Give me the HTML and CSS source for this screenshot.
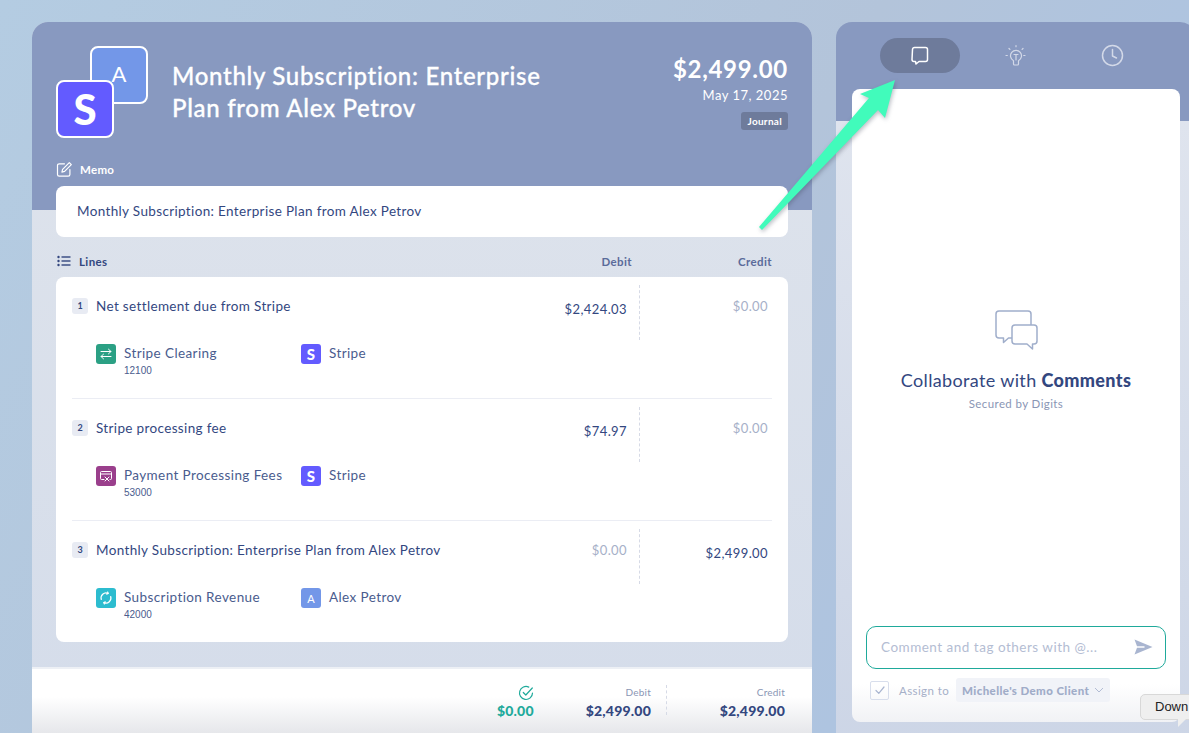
FILE: index.html
```html
<!DOCTYPE html>
<html lang="en">
  <head>
    <meta charset="UTF-8" />
    <meta name="viewport" content="width=device-width, initial-scale=1.0" />
    <title>Monthly Subscription | Digits</title>
    <link rel="stylesheet" href="styles.css">
  </head>
  <body>
    <div class="page">
      <div class="panel left">
        <div class="left-top">
          <div class="head">
            <div class="logos">
              <div class="logo logo-a">A</div>
              <div class="logo logo-s">S</div>
            </div>
            <h1 class="title">Monthly Subscription: Enterprise Plan from Alex Petrov</h1>
            <div class="head-right">
              <div class="amount">$2,499.00</div>
              <div class="date">May 17, 2025</div>
              <div class="badge">Journal</div>
            </div>
          </div>
          <div class="memo-label">
            <svg width="17" height="17" viewBox="0 0 17 17" fill="none" stroke="#fff" stroke-width="1.2" stroke-linecap="round" stroke-linejoin="round">
              <path d="M8.5 2.8H3.2a1.7 1.7 0 0 0-1.7 1.7v9a1.7 1.7 0 0 0 1.7 1.7h9a1.7 1.7 0 0 0 1.7-1.7V8.5" />
              <path d="M13.3 1.6l2 2L8.6 10.4l-2.7.7.7-2.7z" />
            </svg>
            <span>Memo</span>
          </div>
        </div>
        <div class="left-body">
          <div class="memo-card">Monthly Subscription: Enterprise Plan from Alex Petrov</div>
          <div class="lines-head">
            <svg width="14" height="12" viewBox="0 0 14 12" fill="#33477f">
              <circle cx="1.5" cy="2" r="1.2" />
              <circle cx="1.5" cy="6" r="1.2" />
              <circle cx="1.5" cy="10" r="1.2" />
              <rect x="4.5" y="1.3" width="9" height="1.4" />
              <rect x="4.5" y="5.3" width="9" height="1.4" />
              <rect x="4.5" y="9.3" width="9" height="1.4" />
            </svg>
            <span class="lines-name">Lines</span>
            <span class="col-debit">Debit</span>
            <span class="col-credit">Credit</span>
          </div>
          <div class="lines-card">
            <div class="line">
              <div class="line-top">
                <span class="num">1</span>
                <span class="line-name">Net settlement due from Stripe</span>
                <span class="debit low">$2,424.03</span>
                <span class="credit zero">$0.00</span>
              </div>
              <div class="chips">
                <div class="chip chip-first">
                  <span class="ico green">
                    <svg width="14" height="14" viewBox="0 0 14 14" fill="none" stroke="#fff" stroke-width="1" stroke-linecap="round" stroke-linejoin="round">
                      <path d="M2 4.5h10M9.5 2.2L12 4.5 9.5 6.800M12 9.5H2M4.5 7.2L2 9.5l2.5 2.3" />
                    </svg>
                  </span>
                  <div>
                    <div class="chip-name">Stripe Clearing</div>
                    <div class="chip-code">12100</div>
                  </div>
                </div>
                <div class="chip">
                  <span class="ico violet stripe-s">S</span>
                  <div class="chip-name">Stripe</div>
                </div>
              </div>
            </div>
            <div class="line">
              <div class="line-top">
                <span class="num">2</span>
                <span class="line-name">Stripe processing fee</span>
                <span class="debit low">$74.97</span>
                <span class="credit zero">$0.00</span>
              </div>
              <div class="chips">
                <div class="chip chip-first">
                  <span class="ico purple">
                    <svg width="14" height="14" viewBox="0 0 14 14" fill="none" stroke="#fff" stroke-width="1" stroke-linecap="round" stroke-linejoin="round">
                      <path d="M5 10.5H2.500a1 1 0 0 1-1-1v-6a1 1 0 0 1 1-1h9a1 1 0 0 1 1 1v6a1 1 0 0 1-1 1H11M1.5 5h11M6 8l4 4M10 8l-4 4" />
                    </svg>
                  </span>
                  <div>
                    <div class="chip-name">Payment Processing Fees</div>
                    <div class="chip-code">53000</div>
                  </div>
                </div>
                <div class="chip">
                  <span class="ico violet stripe-s">S</span>
                  <div class="chip-name">Stripe</div>
                </div>
              </div>
            </div>
            <div class="line">
              <div class="line-top">
                <span class="num">3</span>
                <span class="line-name">Monthly Subscription: Enterprise Plan from Alex Petrov</span>
                <span class="debit zero">$0.00</span>
                <span class="credit low">$2,499.00</span>
              </div>
              <div class="chips">
                <div class="chip chip-first">
                  <span class="ico teal">
                    <svg width="14" height="14" viewBox="0 0 14 14" fill="none" stroke="#fff" stroke-width="1.2" stroke-linecap="round" stroke-linejoin="round">
                      <path d="M2.3 8.5A5 5 0 0 1 9 2.4M11.7 5.5A5 5 0 0 1 5 11.6" />
                      <path d="M8.6 1l.6 1.5-1.5.6M5.4 13l-.6-1.5 1.5-.6" />
                    </svg>
                  </span>
                  <div>
                    <div class="chip-name">Subscription Revenue</div>
                    <div class="chip-code">42000</div>
                  </div>
                </div>
                <div class="chip">
                  <span class="ico blue">A</span>
                  <div class="chip-name">Alex Petrov</div>
                </div>
              </div>
            </div>
          </div>
        </div>
        <div class="totals">
          <div class="total-check">
            <svg width="16" height="16" viewBox="0 0 16 16" fill="none" stroke="#1faa9b" stroke-width="1.2" stroke-linecap="round" stroke-linejoin="round">
              <path d="M14.5 8A6.5 6.5 0 1 1 10.8 2.1" />
              <path d="M5.3 7.5l2.5 2.5 6.5-7" />
            </svg>
            <div class="total-zero">$0.00</div>
          </div>
          <div class="total total-debit">
            <div class="total-label">Debit</div>
            <div class="total-value">$2,499.00</div>
          </div>
          <div class="total total-credit">
            <div class="total-label">Credit</div>
            <div class="total-value">$2,499.00</div>
          </div>
        </div>
      </div>

      <div class="panel right">
        <div class="tabs">
          <div class="tab active">
            <svg width="22" height="22" viewBox="0 0 22 22" fill="none" stroke="#fff" stroke-width="1.5" stroke-linejoin="round">
              <path d="M3.5 4.5a2 2 0 0 1 2-2h11a2 2 0 0 1 2 2v10a2 2 0 0 1-2 2h-6.500l-3 2.500-.5-2.500h-1.500a2 2 0 0 1-2-2z" />
            </svg>
          </div>
          <div class="tab">
            <svg width="24" height="24" viewBox="0 0 24 24" fill="none" stroke="#d3d9e8" stroke-width="1.2" stroke-linecap="round" stroke-linejoin="round">
              <path d="M9.5 20v-3.300a5.500 5.500 0 1 1 5 0V20a1 1 0 0 1-1 1h-3a1 1 0 0 1-1-1z" />
              <path d="M10 10.5h4M12 10.5V16M12 1.5v1.2M5 4.5l.9.9M19 4.5l-.9.9M2 11.5h1.300M21 11.5h-1.300" />
            </svg>
          </div>
          <div class="tab">
            <svg width="23" height="23" viewBox="0 0 23 23" fill="none" stroke="#d3d9e8" stroke-width="1.5" stroke-linecap="round" stroke-linejoin="round">
              <circle cx="11.5" cy="11.5" r="10" />
              <path d="M11.5 5.5V12l4 2" />
            </svg>
          </div>
        </div>
        <div class="comments">
          <div class="empty">
            <svg width="44" height="44" viewBox="0 0 44 44" fill="none" stroke="#a0aecb" stroke-width="1.5" stroke-linejoin="round">
              <path d="M19 30h-4.500l-5 4.500v-4.500H5a3 3 0 0 1-3-3V6a3 3 0 0 1 3-3h29a3 3 0 0 1 3 3v11" />
              <path d="M18 20a3 3 0 0 1 3-3h19a3 3 0 0 1 3 3v13a3 3 0 0 1-3 3h-1.500v5l-5.500-5H21a3 3 0 0 1-3-3z" fill="#fff" />
            </svg>
            <div class="empty-title">Collaborate with <b>Comments</b></div>
            <div class="empty-sub">Secured by Digits</div>
          </div>
          <div class="input">
            <span>Comment and tag others with @...</span>
            <svg width="19" height="16" viewBox="0 0 19 16" fill="#a9b5d0">
              <path d="M.5.5L18.5 8 .5 15.500 3 8.800h7.500V7.200H3z" />
            </svg>
          </div>
          <div class="assign">
            <span class="check">
              <svg width="12" height="12" viewBox="0 0 12 12" fill="none" stroke="#a9b5d0" stroke-width="1.2" stroke-linecap="round" stroke-linejoin="round">
                <path d="M2 6.5l2.800 2.800L10 3" />
              </svg>
            </span>
            <span class="assign-label">Assign to</span>
            <span class="select">
              Michelle's Demo Client
              <svg width="10" height="6" viewBox="0 0 10 6" fill="none" stroke="#aab5cf" stroke-width="0.9">
                <path d="M1 1l4 4 4-4" />
              </svg>
            </span>
          </div>
        </div>
      </div>
    </div>

    <svg class="arrow" width="1189" height="733" viewBox="0 0 1189 733">
      <polygon points="895,80 860,94 869,98 759,227 762,230 878,110 885,118" fill="#41fbbb" />
    </svg>

    <div class="tooltip">Down</div>
  </body>
</html>
```

FILE: styles.css
```css
* {
  padding: 0;
  margin: 0;
  box-sizing: border-box;
}
body {
  width: 1189px;
  height: 733px;
  overflow: hidden;
  position: relative;
  background: linear-gradient(120deg, #b4cce2 0%, #b3c4da 55%, #a9c4e6 100%);
  font-family: "Lato", "Open Sans", sans-serif;
  color: #33477f;
}
.page {
  display: flex;
  gap: 24px;
  padding: 22px 0 0 32px;
  width: 1240px;
  height: 733px;
}
.panel {
  flex: none;
  height: 740px;
  border-radius: 16px 16px 0 0;
  overflow: hidden;
  background: #d6deeb;
}
.left {
  width: 780px;
  display: flex;
  flex-direction: column;
  background: linear-gradient(180deg, #dfe4ec 0%, #d4dcea 100%);
  position: relative;
}
.left-top {
  height: 188px;
  background: #8899c0;
  padding: 24px 24px 0;
  color: #fff;
}
.head {
  display: flex;
  height: 92px;
}
.logos {
  width: 92px;
  height: 92px;
  flex: none;
  position: relative;
}
.logo {
  width: 58px;
  height: 58px;
  border: 2px solid #fff;
  border-radius: 8px;
  position: absolute;
  display: flex;
  align-items: center;
  justify-content: center;
  color: #fff;
}
.logo-a {
  left: 34px;
  top: 0;
  background: #7397e8;
  font-size: 22px;
  padding-bottom: 3px;
}
.logo-s {
  left: 0;
  top: 34px;
  background: #635bff;
  font-size: 42px;
  font-weight: 900;
}
.title {
  flex: none;
  width: 420px;
  margin: 14px 0 0 24px;
  font-size: 24px;
  line-height: 32px;
  font-weight: 500;
  letter-spacing: 0.7px;
  -webkit-text-stroke: 0.3px #fff;
}
.head-right {
  margin-left: auto;
  display: flex;
  flex-direction: column;
  align-items: flex-end;
}
.amount {
  font-size: 24px;
  line-height: 30px;
  font-weight: 700;
  margin-top: 8px;
  letter-spacing: 0.7px;
}
.date {
  font-size: 13px;
  line-height: 18px;
  margin-top: 2px;
  letter-spacing: 0.5px;
}
.badge {
  margin-top: 8px;
  height: 18px;
  padding: 0 6px;
  background: #6e7b9b;
  border-radius: 3px;
  font-size: 10px;
  font-weight: 700;
  line-height: 18px;
  letter-spacing: 0.3px;
}
.memo-label {
  margin-top: 23px;
  display: flex;
  align-items: center;
  gap: 7px;
  font-size: 11.5px;
  font-weight: 700;
  letter-spacing: 0.3px;
}
.left-body {
  flex: 1;
  padding: 0 24px;
  margin-top: -24px;
}
.memo-card {
  height: 51px;
  background: #fff;
  border-radius: 8px;
  padding-left: 21px;
  font-size: 13.5px;
  line-height: 51px;
  letter-spacing: 0.35px;
}
.lines-head {
  height: 40px;
  padding: 8px 0 0 1px;
  display: flex;
  align-items: center;
  font-size: 11.5px;
  font-weight: 700;
  letter-spacing: 0.4px;
  color: #5a6b9a;
}
.lines-name {
  margin-left: 8px;
  color: #33477f;
}
.col-debit {
  margin-left: auto;
  width: 100px;
  text-align: right;
}
.col-credit {
  width: 156px;
  padding-right: 16px;
  text-align: right;
}
.lines-card {
  height: 365px;
  background: #fff;
  border-radius: 8px;
  padding: 0 16px;
}
.line {
  height: 122px;
  border-bottom: 1px solid #ebedf4;
  padding-top: 8px;
}
.line:last-child {
  border-bottom: none;
}
.line-top {
  display: flex;
  height: 55px;
}
.num {
  flex: none;
  width: 16px;
  height: 16px;
  margin-top: 13px;
  background: #e8ebf3;
  border-radius: 3px;
  font-size: 9px;
  font-weight: 700;
  line-height: 15px;
  text-align: center;
}
.line-name {
  flex: 1;
  margin-left: 8px;
  font-size: 13.5px;
  line-height: 20px;
  margin-top: 11px;
  letter-spacing: 0.35px;
}
.debit,
.credit {
  font-size: 13px;
  line-height: 18px;
  text-align: right;
  padding-top: 12px;
  box-sizing: content-box;
  letter-spacing: 0.4px;
}
.debit {
  width: 120px;
  padding-right: 12px;
  border-right: 1px dashed #d6dae6;
}
.credit {
  width: 128px;
  padding-right: 4px;
}
.low {
  padding-top: 15px;
}
.zero {
  color: #a6b0c8;
}
.chips {
  display: flex;
  margin-top: 4px;
  padding-left: 24px;
}
.chip {
  display: flex;
  gap: 8px;
}
.chip-first {
  width: 205px;
}
.ico {
  flex: none;
  width: 20px;
  height: 20px;
  border-radius: 3px;
  display: flex;
  align-items: center;
  justify-content: center;
  color: #fff;
  font-size: 11px;
}
.green {
  background: #2ba084;
}
.purple {
  background: #9a3f8c;
}
.teal {
  background: #2cbccf;
}
.blue {
  background: #7397e8;
}
.violet {
  background: #635bff;
}
.stripe-s {
  font-size: 15px;
  font-weight: 900;
}
.chip-name {
  font-size: 13.5px;
  line-height: 18px;
  letter-spacing: 0.4px;
  color: #4a5c8e;
  white-space: nowrap;
}
.chip-code {
  font-size: 10px;
  line-height: 12px;
  margin-top: 3px;
  color: #4a5c8e;
  font-family: "Liberation Sans", sans-serif;
}
.totals {
  position: absolute;
  left: 0;
  right: 0;
  top: 645px;
  height: 95px;
  background: linear-gradient(180deg, #fff 0%, #fff 30%, #e4e5e9 72%);
  border-top: 2px solid #edf0f5;
  display: flex;
  justify-content: flex-end;
  padding: 16px 27px 0 0;
}
.total-check {
  display: flex;
  flex-direction: column;
  align-items: flex-end;
  margin-right: 52px;
}
.total-zero {
  color: #1faa9b;
  font-size: 14px;
  font-weight: 900;
  letter-spacing: 0.2px;
  line-height: 18px;
  margin-top: 1px;
}
.total {
  text-align: right;
}
.total-debit {
  padding-right: 15px;
  border-right: 1px dashed #d6dae6;
  height: 30px;
}
.total-credit {
  width: 118px;
}
.total-label {
  font-size: 10px;
  line-height: 14px;
  letter-spacing: 0.2px;
  color: #8a96b5;
}
.total-value {
  font-size: 14px;
  font-weight: 900;
  letter-spacing: 0.2px;
  line-height: 18px;
  margin-top: 3px;
}
.right {
  width: 360px;
  background: linear-gradient(180deg, #8899c0 0, #8899c0 99px, #dfe4ee 99px, #ccd5e6 100%);
  padding: 16px;
}
.tabs {
  display: flex;
  height: 35px;
  padding: 0 28px;
  margin-bottom: 16px;
}
.tab {
  flex: none;
  width: 80px;
  margin-right: 16px;
  height: 35px;
  border-radius: 18px;
  display: flex;
  align-items: center;
  justify-content: center;
}
.active {
  background: #6e7b9b;
}
.comments {
  height: 633px;
  background: linear-gradient(180deg, #fff 0%, #fff 94%, #f1f2f5 100%);
  border-radius: 8px;
  display: flex;
  flex-direction: column;
  padding: 0 14px;
}
.empty {
  margin-top: 219px;
  text-align: center;
  height: 318px;
}
.empty-title {
  margin-top: 13px;
  font-size: 18px;
  line-height: 24px;
  letter-spacing: 0.35px;
}
.empty-title b {
  font-weight: 900;
}
.empty-sub {
  margin-top: 4px;
  font-size: 11.5px;
  line-height: 16px;
  letter-spacing: 0.4px;
  color: #8a96b5;
}
.input {
  height: 43px;
  border: 1px solid #1faa9b;
  border-radius: 10px;
  display: flex;
  align-items: center;
  justify-content: space-between;
  padding: 0 12px 2px 14px;
  font-size: 13.5px;
  letter-spacing: 0.5px;
  color: #b4bdd3;
  flex: none;
}
.assign {
  display: flex;
  align-items: center;
  margin-top: 9px;
  padding-left: 4px;
  font-size: 11.5px;
  color: #a6b0c8;
  letter-spacing: 0.4px;
}
.check {
  width: 19px;
  height: 19px;
  border: 1px solid #d8deec;
  border-radius: 2px;
  display: flex;
  align-items: center;
  justify-content: center;
}
.assign-label {
  margin: 0 7px 0 10px;
}
.select {
  height: 24px;
  padding: 0 6px;
  background: #f1f3f8;
  border-radius: 3px;
  display: flex;
  align-items: center;
  gap: 5px;
  font-weight: 900;
  color: #a0acc8;
  white-space: nowrap;
}
.arrow {
  position: absolute;
  left: 0;
  top: 0;
  pointer-events: none;
  filter: drop-shadow(1px 2px 2px rgba(60, 70, 90, 0.35));
}
.tooltip {
  position: absolute;
  left: 1140px;
  top: 694px;
  width: 80px;
  height: 26px;
  padding-left: 14px;
  background: #efefef;
  border: 1px solid #d8d8d8;
  border-radius: 5px;
  font-family: "Liberation Sans", sans-serif;
  font-size: 13px;
  line-height: 24px;
  color: #222;
}
.tooltip::after {
  content: "";
  position: absolute;
  left: 37px;
  top: 24px;
  border-left: 8px solid #efefef;
  border-bottom: 8px solid transparent;
}
```
